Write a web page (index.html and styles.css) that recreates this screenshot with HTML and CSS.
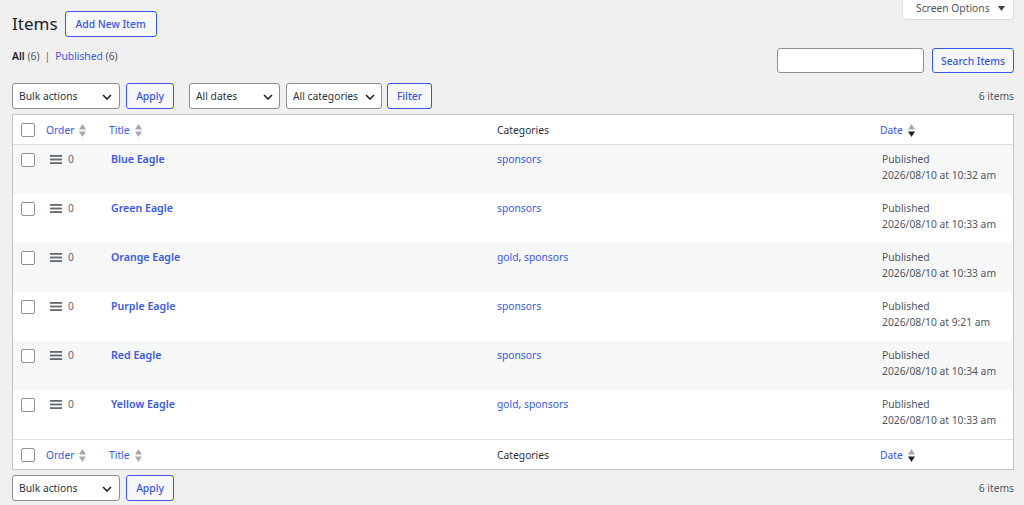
FILE: index.html
```html
<!DOCTYPE html>
<html lang="en">
<head>
	<meta charset="UTF-8">
	<title>Items</title>
	<link rel="stylesheet" href="styles.css">
</head>
<body>
	<div class="wrap">
		<div class="page-head">
			<div class="title-group">
				<h1>Items</h1>
				<a class="button" href="#">Add New Item</a>
			</div>
			<button class="screen-options">Screen Options
				<svg width="7" height="5" viewBox="0 0 7 5"><path d="M0 0h7L3.5 5z" fill="#3c434a"/></svg>
			</button>
		</div>

		<div class="views-row">
			<ul class="subsubsub">
				<li class="current">All <span class="count">(6)</span></li>
				<li class="sep">|</li>
				<li><a href="#">Published</a> <span class="count">(6)</span></li>
			</ul>
			<div class="search-box">
				<input type="search">
				<button class="button">Search Items</button>
			</div>
		</div>

		<div class="tablenav">
			<select class="select bulk"><option>Bulk actions</option></select>
			<button class="button apply">Apply</button>
			<select class="select dates"><option>All dates</option></select>
			<select class="select cats"><option>All categories</option></select>
			<button class="button filter">Filter</button>
			<span class="displaying-num">6 items</span>
		</div>

		<table class="list-table">
			<colgroup>
				<col class="col-cb">
				<col class="col-order">
				<col class="col-title">
				<col class="col-cats">
				<col class="col-date">
			</colgroup>
			<thead>
				<tr>
					<th class="check-column"><input type="checkbox"></th>
					<th class="sortable"><a href="#">Order</a><svg class="sort" width="7" height="13" viewBox="0 0 7 13"><path d="M0 5.5L3.5 0 7 5.5z" fill="#a7aaad"/><path d="M0 7.5h7L3.5 13z" fill="#a7aaad"/></svg></th>
					<th class="sortable"><a href="#">Title</a><svg class="sort" width="7" height="13" viewBox="0 0 7 13"><path d="M0 5.5L3.5 0 7 5.5z" fill="#a7aaad"/><path d="M0 7.5h7L3.5 13z" fill="#a7aaad"/></svg></th>
					<th class="plain">Categories</th>
					<th class="sortable"><a href="#">Date</a><svg class="sort" width="7" height="13" viewBox="0 0 7 13"><path d="M0 5.5L3.5 0 7 5.5z" fill="#a7aaad"/><path d="M0 7.5h7L3.5 13z" fill="#1d2327"/></svg></th>
				</tr>
			</thead>
			<tbody id="rows"></tbody>
			<tfoot>
				<tr>
					<th class="check-column"><input type="checkbox"></th>
					<th class="sortable"><a href="#">Order</a><svg class="sort" width="7" height="13" viewBox="0 0 7 13"><path d="M0 5.5L3.5 0 7 5.5z" fill="#a7aaad"/><path d="M0 7.5h7L3.5 13z" fill="#a7aaad"/></svg></th>
					<th class="sortable"><a href="#">Title</a><svg class="sort" width="7" height="13" viewBox="0 0 7 13"><path d="M0 5.5L3.5 0 7 5.5z" fill="#a7aaad"/><path d="M0 7.5h7L3.5 13z" fill="#a7aaad"/></svg></th>
					<th class="plain">Categories</th>
					<th class="sortable"><a href="#">Date</a><svg class="sort" width="7" height="13" viewBox="0 0 7 13"><path d="M0 5.5L3.5 0 7 5.5z" fill="#a7aaad"/><path d="M0 7.5h7L3.5 13z" fill="#1d2327"/></svg></th>
				</tr>
			</tfoot>
		</table>

		<div class="tablenav bottom">
			<select class="select bulk"><option>Bulk actions</option></select>
			<button class="button apply">Apply</button>
			<span class="displaying-num">6 items</span>
		</div>
	</div>

	<script>
		const items = [
			['Blue Eagle', 'sponsors', '10:32 am'],
			['Green Eagle', 'sponsors', '10:33 am'],
			['Orange Eagle', 'gold, sponsors', '10:33 am'],
			['Purple Eagle', 'sponsors', '9:21 am'],
			['Red Eagle', 'sponsors', '10:34 am'],
			['Yellow Eagle', 'gold, sponsors', '10:33 am']
		]
		const handle = '<svg class="handle" width="12" height="9" viewBox="0 0 12 9"><rect y="0" width="12" height="1.8" fill="#646970"/><rect y="3.6" width="12" height="1.8" fill="#646970"/><rect y="7.2" width="12" height="1.8" fill="#646970"/></svg>'
		let html = ''
		items.forEach(function (item) {
			let cats = item[1].split(', ').map(c => `<a href="#">${c}</a>`).join(', ')
			html += `<tr>
				<td class="check-column"><input type="checkbox"></td>
				<td class="order">${handle}<span>0</span></td>
				<td class="title"><a href="#">${item[0]}</a></td>
				<td class="cats">${cats}</td>
				<td class="date">Published<br>2026/08/10 at ${item[2]}</td>
			</tr>`
		})
		document.getElementById('rows').innerHTML = html
	</script>
</body>
</html>
```

FILE: styles.css
```css
html, body {
	margin: 0;
	background: #f0f0f1;
}
body {
	font-family: "Noto Sans", "Liberation Sans", sans-serif;
	font-size: 10.3px;
	color: #3c434a;
}
a {
	color: #3858e9;
	text-decoration: none;
}
.wrap {
	padding: 0 10px 0 12px;
}

.page-head {
	display: flex;
	justify-content: space-between;
	align-items: flex-start;
}
.title-group {
	display: flex;
	align-items: center;
	margin-top: 11px;
}
h1 {
	margin: 0 7px 0 0;
	font-size: 17px;
	font-weight: 400;
	line-height: 26px;
	color: #1d2327;
}
.button {
	display: inline-flex;
	align-items: center;
	justify-content: center;
	box-sizing: border-box;
	height: 26px;
	padding: 0 10px;
	border: 1px solid #3858e9;
	border-radius: 3px;
	background: #f6f7f7;
	color: #3858e9;
	font-family: inherit;
	font-size: 10.3px;
	font-weight: 500;
}
.screen-options {
	display: flex;
	align-items: center;
	gap: 8px;
	box-sizing: border-box;
	width: 112px;
	height: 21px;
	margin-top: -1px;
	padding: 0 0 3px 13px;
	border: 1px solid #dcdcde;
	border-radius: 0 0 4px 4px;
	background: #fff;
	color: #50575e;
	font-family: inherit;
	font-size: 10.3px;
}

.views-row {
	display: flex;
	justify-content: space-between;
	align-items: flex-start;
	margin-top: 11px;
}
.subsubsub {
	display: flex;
	gap: 4px;
	margin: 0;
	padding: 0;
	list-style: none;
	line-height: 16px;
	color: #646970;
}
.subsubsub .current {
	color: #1d2327;
	font-weight: 600;
}
.subsubsub .count {
	font-weight: 400;
	color: #50575e;
}
.subsubsub .sep {
	margin: 0 1px;
}
.search-box {
	display: flex;
	gap: 8px;
}
.search-box input {
	box-sizing: border-box;
	width: 147px;
	height: 25px;
	margin: 0;
	border: 1px solid #8c8f94;
	border-radius: 3px;
	background: #fff;
}
.search-box .button {
	width: 82px;
	height: 25px;
	padding: 0;
}

.tablenav {
	display: flex;
	align-items: center;
	height: 26px;
	margin: 10px 0 5px;
}
.tablenav.bottom {
	margin: 5px 0 0;
}
.select {
	box-sizing: border-box;
	height: 26px;
	margin: 0;
	padding: 0 0 0 6px;
	border: 1px solid #8c8f94;
	border-radius: 3px;
	background: #fff url("data:image/svg+xml;utf8,<svg xmlns='http://www.w3.org/2000/svg' width='10' height='6' viewBox='0 0 10 6'><path d='M1 1l4 4 4-4' fill='none' stroke='%231d2327' stroke-width='1.6'/></svg>") no-repeat;
	color: #2c3338;
	font-family: inherit;
	font-size: 10.3px;
	appearance: none;
	-webkit-appearance: none;
}
.bulk {
	width: 108px;
	background-position: 89px 10px;
}
.dates {
	width: 91px;
	margin-left: 15px;
	background-position: 73px 10px;
}
.cats {
	width: 96px;
	margin-left: 6px;
	background-position: 78px 10px;
}
.apply {
	width: 48px;
	margin-left: 6px;
	padding: 0;
}
.filter {
	width: 45px;
	margin-left: 5px;
	padding: 0;
}
.displaying-num {
	margin-left: auto;
	color: #50575e;
}

.list-table {
	width: 100%;
	table-layout: fixed;
	border-spacing: 0;
	border: 1px solid #c3c4c7;
	background: #fff;
}
.col-cb { width: 25px; }
.col-order { width: 63px; }
.col-title { width: 388px; }
.col-cats { width: 383px; }
.col-date { width: 141px; }

.list-table th {
	height: 29px;
	padding: 0 0 0 8px;
	text-align: left;
	font-weight: 400;
	vertical-align: middle;
	color: #2c3338;
	white-space: nowrap;
}
.list-table thead th {
	border-bottom: 1px solid #dcdcde;
}
.list-table tfoot th {
	border-top: 1px solid #dcdcde;
}
.list-table th .sort {
	margin-left: 5px;
	vertical-align: -3px;
}
.list-table td {
	height: 49px;
	box-sizing: border-box;
	padding: 6px 0 0 10px;
	vertical-align: top;
	line-height: 16px;
}
.list-table tbody tr:nth-child(odd) td {
	background: #f6f7f7;
}
.list-table .check-column {
	padding: 0 0 0 8px;
}
.list-table td.check-column {
	padding-top: 8px;
}
input[type="checkbox"] {
	display: block;
	box-sizing: border-box;
	width: 14px;
	height: 14px;
	margin: 0;
	border: 1px solid #8c8f94;
	border-radius: 2px;
	background: #fff;
	appearance: none;
	-webkit-appearance: none;
}
.list-table td.order {
	padding-left: 12px;
	color: #646970;
}
.order .handle {
	margin-right: 6px;
	vertical-align: -1px;
}
.title a {
	font-weight: 600;
	font-size: 10.6px;
}
.list-table td.cats {
	padding-left: 8px;
}
.date {
	color: #50575e;
}
```
